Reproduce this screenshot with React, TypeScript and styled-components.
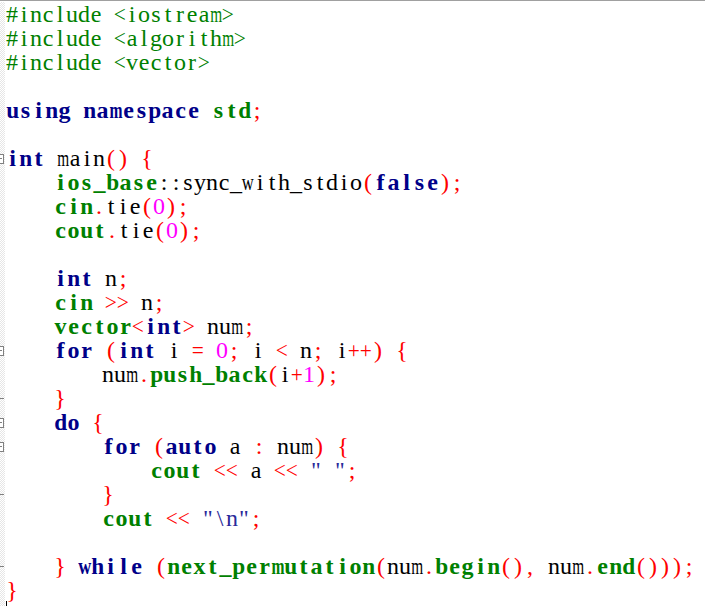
import React from "react";
import styled, { createGlobalStyle, css } from "styled-components";

const GlobalStyle = createGlobalStyle`
  html, body { margin: 0; padding: 0; background: #ffffff; }
  body { overflow: hidden; }
`;

type Kind = "pp" | "kw" | "fn" | "op" | "num" | "str" | "id" | "sp";
type Fold = "open" | "close" | "none";

const FONT_SIZE = 24;

const KEYWORDS = new Set(["using", "namespace", "int", "false", "for", "auto", "do", "while"]);
const FUNCS = new Set([
  "std",
  "ios_base",
  "cin",
  "cout",
  "vector",
  "push_back",
  "next_permutation",
  "begin",
  "end",
]);

/* advance widths of Liberation Serif (per 1000 em) */
const REGULAR_W: Record<string, number> = {
  " ": 250, '"': 408, "#": 500, "(": 333, ")": 333, "+": 564, ",": 250, ".": 250,
  ":": 278, ";": 278, "<": 564, "=": 564, ">": 564, "\\": 278, _: 500, "{": 480, "}": 480,
  a: 444, b: 500, c: 444, d: 500, e: 444, f: 333, g: 500, h: 500, i: 278, j: 278, k: 500,
  l: 278, m: 778, n: 500, o: 500, p: 500, q: 500, r: 333, s: 389, t: 278, u: 500, v: 500,
  w: 722, x: 500, y: 500, z: 444,
};
const BOLD_W: Record<string, number> = {
  a: 500, b: 556, c: 444, d: 556, e: 444, f: 333, g: 500, h: 556, i: 278, k: 556, l: 278,
  m: 833, n: 556, o: 500, p: 556, r: 444, s: 389, t: 333, u: 556, v: 500, w: 722, x: 500, _: 500,
};

function squeeze(ch: string, bold: boolean): number {
  const w = (bold ? BOLD_W[ch] ?? REGULAR_W[ch] : REGULAR_W[ch]) ?? 500;
  const px = (w * FONT_SIZE) / 1000;
  const limit = bold ? 13 : 12;
  return Math.round(Math.min(1, limit / px) * 100) / 100;
}

function tokenize(line: string): [string, Kind][] {
  if (line.trimStart().startsWith("#")) return [[line, "pp"]];
  const re = /(\s+)|("(?:\\.|[^"])*")|([A-Za-z_]\w*)|(\d+)|(::)|(<<|>>|\+\+|[^\s\w])/g;
  const out: [string, Kind][] = [];
  let m: RegExpExecArray | null;
  while ((m = re.exec(line))) {
    if (m[1]) out.push([m[1], "sp"]);
    else if (m[2]) out.push([m[2], "str"]);
    else if (m[3]) out.push([m[3], KEYWORDS.has(m[3]) ? "kw" : FUNCS.has(m[3]) ? "fn" : "id"]);
    else if (m[4]) out.push([m[4], "num"]);
    else if (m[5]) out.push([m[5], "id"]);
    else if (m[6]) out.push([m[6], "op"]);
  }
  return out;
}

const SOURCE: [string, Fold][] = [
  ["#include <iostream>", "none"],
  ["#include <algorithm>", "none"],
  ["#include <vector>", "none"],
  ["", "none"],
  ["using namespace std;", "none"],
  ["", "none"],
  ["int main() {", "open"],
  ["    ios_base::sync_with_stdio(false);", "none"],
  ["    cin.tie(0);", "none"],
  ["    cout.tie(0);", "none"],
  ["", "none"],
  ["    int n;", "none"],
  ["    cin >> n;", "none"],
  ["    vector<int> num;", "none"],
  ["    for (int i = 0; i < n; i++) {", "open"],
  ["        num.push_back(i+1);", "none"],
  ["    }", "close"],
  ["    do {", "open"],
  ["        for (auto a : num) {", "open"],
  ["            cout << a << \" \";", "none"],
  ["        }", "close"],
  ["        cout << \"\\n\";", "none"],
  ["", "none"],
  ["    } while (next_permutation(num.begin(), num.end()));", "close"],
  ["}", "none"],
];

const Editor = styled.div`
  box-sizing: border-box;
  width: 705px;
  height: 606px;
  overflow: hidden;
  border-top: 1px solid #a0a0a0;
  padding-top: 1px;
  background: #ffffff;
`;

const Line = styled.div`
  display: flex;
  align-items: stretch;
  height: 24px;
`;

const Margin = styled.div<{ $fold: Fold }>`
  position: relative;
  flex: none;
  width: 5px;
  margin-right: 1px;
  background: repeating-conic-gradient(#e6e6e6 0 25%, #ffffff 0 50%) 0 0 / 2px 2px;

  ${(p) =>
    p.$fold === "open" &&
    css`
      &::after {
        content: "";
        position: absolute;
        left: -6px;
        top: 8px;
        width: 8px;
        height: 8px;
        border: 1px solid #808080;
        background: #ffffff;
      }
      &::before {
        content: "";
        position: absolute;
        left: 0;
        top: 12px;
        width: 2px;
        height: 1px;
        background: #808080;
        z-index: 1;
      }
    `}

  ${(p) =>
    p.$fold === "close" &&
    css`
      &::after {
        content: "";
        position: absolute;
        left: 0;
        top: 12px;
        width: 4px;
        height: 1px;
        background: #808080;
      }
    `}
`;

const Code = styled.div`
  display: flex;
  flex: none;
  white-space: pre;
  font-family: "Liberation Serif", "Times New Roman", serif;
  font-size: ${FONT_SIZE}px;
  line-height: 24px;
`;

const COLORS: Record<Kind, string> = {
  pp: "#008000",
  kw: "#000088",
  fn: "#008000",
  op: "#ff0000",
  num: "#ff00ff",
  str: "#2a2a9a",
  id: "#000000",
  sp: "#000000",
};

const Cell = styled.span<{ $kind: Kind }>`
  display: flex;
  justify-content: center;
  flex: none;
  width: ${(p) => (p.$kind === "kw" || p.$kind === "fn" ? 13 : 12)}px;
  color: ${(p) => COLORS[p.$kind]};
  font-weight: ${(p) => (p.$kind === "kw" || p.$kind === "fn" ? 700 : 400)};
`;

const Ink = styled.span<{ $sx: number }>`
  display: block;
  transform: scaleX(${(p) => p.$sx});
  transform-origin: 50% 50%;
`;

const Caret = styled.div`
  width: 1px;
  height: 24px;
  margin-top: -1px;
  background: #000000;
`;

export default function App() {
  return (
    <>
      <GlobalStyle />
      <Editor>
        {SOURCE.map(([text, fold], i) => (
          <Line key={i}>
            <Margin $fold={fold} />
            <Code>
              {tokenize(text).flatMap(([t, k], j) =>
                Array.from(t).map((ch, c) => {
                  const bold = k === "kw" || k === "fn";
                  return (
                    <Cell key={`${j}-${c}`} $kind={k}>
                      <Ink $sx={squeeze(ch, bold)}>{ch}</Ink>
                    </Cell>
                  );
                })
              )}
            </Code>
          </Line>
        ))}
        <Line>
          <Margin $fold="none" />
          <Caret />
        </Line>
      </Editor>
    </>
  );
}
